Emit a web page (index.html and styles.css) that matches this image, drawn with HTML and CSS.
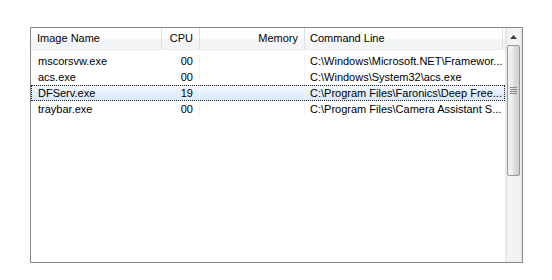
FILE: index.html
```html
<!DOCTYPE html>
<html>
<head>
  <link rel="stylesheet" href="styles.css">
</head>
<body>
  <div class="listview">
    <div class="list">
      <div class="header">
        <div class="col name">Image Name</div>
        <div class="col cpu num">CPU</div>
        <div class="col mem num">Memory</div>
        <div class="col cmd">Command Line</div>
      </div>
      <div class="rows">
        <div class="row">
          <div class="col name">mscorsvw.exe</div>
          <div class="col cpu num">00</div>
          <div class="col mem num"></div>
          <div class="col cmd">C:\Windows\Microsoft.NET\Framewor...</div>
        </div>
        <div class="row">
          <div class="col name">acs.exe</div>
          <div class="col cpu num">00</div>
          <div class="col mem num"></div>
          <div class="col cmd">C:\Windows\System32\acs.exe</div>
        </div>
        <div class="row selected">
          <div class="col name">DFServ.exe</div>
          <div class="col cpu num">19</div>
          <div class="col mem num"></div>
          <div class="col cmd">C:\Program Files\Faronics\Deep Free...</div>
        </div>
        <div class="row">
          <div class="col name">traybar.exe</div>
          <div class="col cpu num">00</div>
          <div class="col mem num"></div>
          <div class="col cmd">C:\Program Files\Camera Assistant S...</div>
        </div>
      </div>
    </div>
    <div class="scrollbar">
      <div class="arrow">
        <svg width="7" height="4" viewBox="0 0 7 4"><path d="M3.5 0 L7 4 L0 4 Z" fill="#3c3c3c"/></svg>
      </div>
      <div class="thumb">
        <div class="grip"></div>
      </div>
    </div>
  </div>
</body>
</html>
```

FILE: styles.css
```css
body {
  margin: 0;
  background: #fff;
  font-family: "Liberation Sans", Arial, sans-serif;
  font-size: 11px;
  color: #000;
}

.listview {
  display: flex;
  margin: 27px 0 0 30px;
  width: 491px;
  height: 234px;
  border: 1px solid #828790;
}

.list {
  flex: 1;
  display: flex;
  flex-direction: column;
}

.header {
  display: flex;
  height: 21px;
  background: linear-gradient(#ffffff, #ffffff 50%, #f4f5f7 51%, #f4f5f7);
  border-bottom: 1px solid #e7e9ec;
}

.header .col {
  line-height: 21px;
  border-right: 1px solid #dde2e8;
}

.col {
  box-sizing: border-box;
  padding: 0 6px;
  white-space: nowrap;
  overflow: hidden;
}

.name { width: 131px; }
.cpu { width: 38px; }
.mem { width: 105px; }
.cmd { width: 198px; padding-left: 5px; }

.num { text-align: right; }

.rows {
  padding-top: 3px;
}

.row {
  display: flex;
  height: 16px;
  box-sizing: border-box;
  border: 1px solid transparent;
}

.row .col {
  line-height: 14px;
}

.row .cpu,
.row .mem {
  border-right: 1px solid #f1f2f4;
}

.row .name { width: 130px; padding-left: 6px; }
.row .cpu { width: 38px; }

.selected {
  background: linear-gradient(#f1f7fe, #d8e8fb);
  border: 1px dotted #1f1f1f;
}

.scrollbar {
  width: 17px;
  background: linear-gradient(90deg, #e3e3e3, #f3f3f3 20%, #f3f3f3 80%, #e8e8e8);
  display: flex;
  flex-direction: column;
  align-items: center;
}

.arrow {
  height: 17px;
  width: 17px;
  display: flex;
  align-items: center;
  justify-content: center;
}

.thumb {
  width: 13px;
  height: 131px;
  box-sizing: border-box;
  padding-top: 41px;
  border: 1px solid #979797;
  border-radius: 2px;
  background: linear-gradient(90deg, #f3f3f3, #ebebeb 45%, #dcdcdc 55%, #d0d0d0);
  display: flex;
  justify-content: center;
}

.grip {
  width: 7px;
  height: 5px;
  border-top: 1px solid #8a8a8a;
  border-bottom: 1px solid #8a8a8a;
  background: linear-gradient(transparent 1px, #8a8a8a 1px, #8a8a8a 2px, transparent 2px, transparent 3px, #8a8a8a 3px, #8a8a8a 4px, transparent 4px);
}
```
